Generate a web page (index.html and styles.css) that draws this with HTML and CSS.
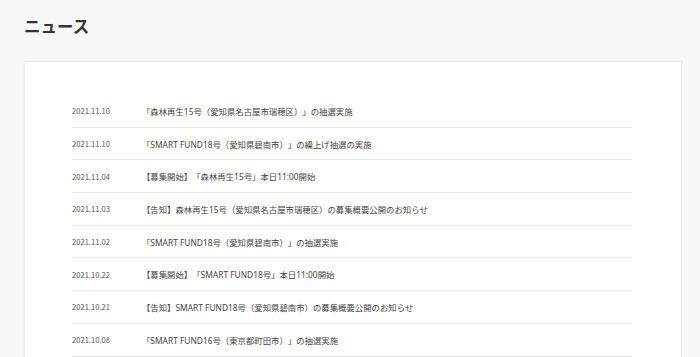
FILE: index.html
```html
<html>
<head>
  <meta charset="utf-8">
  <link rel="stylesheet" href="styles.css">
</head>
<body>
  <h1 class="pageTitle">ニュース</h1>
  <div class="newsCard">
    <ul class="newsList">
      <li><span class="date">2021.11.10</span><span class="title">「森林再生15号（愛知県名古屋市瑞穂区）」の抽選実施</span></li>
      <li><span class="date">2021.11.10</span><span class="title">「SMART FUND18号（愛知県碧南市）」の繰上げ抽選の実施</span></li>
      <li><span class="date">2021.11.04</span><span class="title">【募集開始】「森林再生15号」本日11:00開始</span></li>
      <li><span class="date">2021.11.03</span><span class="title">【告知】森林再生15号（愛知県名古屋市瑞穂区）の募集概要公開のお知らせ</span></li>
      <li><span class="date">2021.11.02</span><span class="title">「SMART FUND18号（愛知県碧南市）」の抽選実施</span></li>
      <li><span class="date">2021.10.22</span><span class="title">【募集開始】「SMART FUND18号」本日11:00開始</span></li>
      <li><span class="date">2021.10.21</span><span class="title">【告知】SMART FUND18号（愛知県碧南市）の募集概要公開のお知らせ</span></li>
      <li><span class="date">2021.10.08</span><span class="title">「SMART FUND16号（東京都町田市）」の抽選実施</span></li>
    </ul>
  </div>
</body>
</html>
```

FILE: styles.css
```css
body {margin:0;padding:0 18px 0 24px;background-color:#f7f7f7;font-family:"Noto Sans CJK JP","Noto Sans",sans-serif;color:#444;}
.pageTitle {margin:14px 0 22px;font-size:16.5px;line-height:25px;font-weight:bold;color:#333;}
.newsCard {background-color:#fff;border:1px solid #ededed;box-shadow:0 0 2px rgba(0,0,0,0.04);padding:33px 49px 0 47px;}
.newsList {list-style:none;margin:0;padding:0;}
.newsList li {display:flex;align-items:center;height:31.7px;border-bottom:1px solid #e8e8e8;}
.newsList .date {width:70px;flex-shrink:0;font-size:7.6px;color:#555;}
.newsList .title {font-family:"Noto Sans","Noto Sans CJK JP",sans-serif;font-size:8.4px;color:#444;white-space:nowrap;text-spacing-trim:space-all;}
```
